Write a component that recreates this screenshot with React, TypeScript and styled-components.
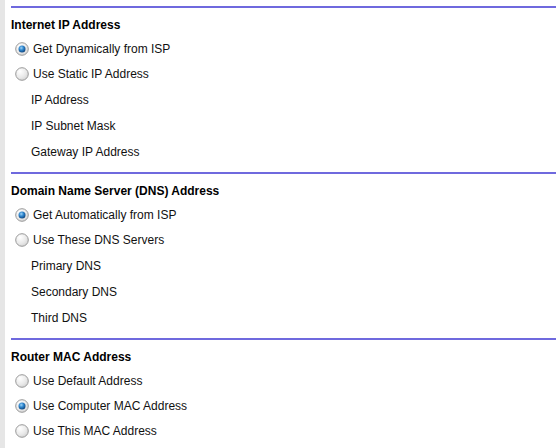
import React from 'react';
import styled, { createGlobalStyle } from 'styled-components';

const GlobalStyle = createGlobalStyle`
  html, body {
    margin: 0;
    padding: 0;
    background: #ffffff;
  }
  body {
    font-family: 'Liberation Sans', Arial, sans-serif;
    font-size: 12px;
    color: #111111;
  }
`;

const Page = styled.div`
  display: flex;
  min-height: 448px;
  box-sizing: border-box;
  overflow: hidden;
`;

const Gutter = styled.div`
  width: 5px;
  flex: none;
  background: #e6e6e6;
`;

const Panel = styled.div`
  flex: 1;
  padding: 6px 0 0 6px;
`;

const Section = styled.section`
  border-top: 2px solid #6f69de;
  padding-bottom: 8px;
`;

const Heading = styled.h3`
  margin: 0;
  height: 28px;
  padding-top: 6px;
  box-sizing: border-box;
  display: flex;
  align-items: center;
  font-size: 12px;
  font-weight: bold;
  color: #000000;
`;

const OptionRow = styled.label`
  display: flex;
  align-items: center;
  height: 25px;
  padding: 1px 0 0 4px;
  box-sizing: border-box;
  gap: 4px;
  cursor: default;
`;

const FieldRow = styled.div`
  display: flex;
  align-items: center;
  height: 26px;
  padding: 1px 0 0 20px;
  box-sizing: border-box;
`;

const RadioMark: React.FC<{ checked?: boolean }> = ({ checked }) => (
  <svg width="14" height="14" viewBox="0 0 14 14" aria-hidden="true">
    <defs>
      <radialGradient id="rb-face" cx="0.35" cy="0.3" r="0.8">
        <stop offset="0" stopColor="#ffffff" />
        <stop offset="0.6" stopColor="#e9e9e9" />
        <stop offset="1" stopColor="#cfcfcf" />
      </radialGradient>
      <radialGradient id="rb-dot" cx="0.4" cy="0.35" r="0.7">
        <stop offset="0" stopColor="#9fd3f5" />
        <stop offset="0.45" stopColor="#2f87cf" />
        <stop offset="1" stopColor="#0d3f75" />
      </radialGradient>
    </defs>
    <circle cx="7" cy="7" r="6.3" fill="url(#rb-face)" stroke="#9a9a9a" strokeWidth="1" />
    {checked && <circle cx="7" cy="7" r="3.5" fill="url(#rb-dot)" />}
  </svg>
);

const Option: React.FC<{ label: string; checked?: boolean }> = ({ label, checked }) => (
  <OptionRow>
    <RadioMark checked={checked} />
    <span>{label}</span>
  </OptionRow>
);

type Block = {
  title: string;
  options: { label: string; checked?: boolean }[];
  fields: string[];
};

const blocks: Block[] = [
  {
    title: 'Internet IP Address',
    options: [
      { label: 'Get Dynamically from ISP', checked: true },
      { label: 'Use Static IP Address' },
    ],
    fields: ['IP Address', 'IP Subnet Mask', 'Gateway IP Address'],
  },
  {
    title: 'Domain Name Server (DNS) Address',
    options: [
      { label: 'Get Automatically from ISP', checked: true },
      { label: 'Use These DNS Servers' },
    ],
    fields: ['Primary DNS', 'Secondary DNS', 'Third DNS'],
  },
  {
    title: 'Router MAC Address',
    options: [
      { label: 'Use Default Address' },
      { label: 'Use Computer MAC Address', checked: true },
      { label: 'Use This MAC Address' },
    ],
    fields: [],
  },
];

export default function App() {
  return (
    <>
      <GlobalStyle />
      <Page>
        <Gutter />
        <Panel>
          {blocks.map(block => (
            <Section key={block.title}>
              <Heading>{block.title}</Heading>
              {block.options.map(opt => (
                <Option key={opt.label} label={opt.label} checked={opt.checked} />
              ))}
              {block.fields.map(f => (
                <FieldRow key={f}>{f}</FieldRow>
              ))}
            </Section>
          ))}
        </Panel>
      </Page>
    </>
  );
}
